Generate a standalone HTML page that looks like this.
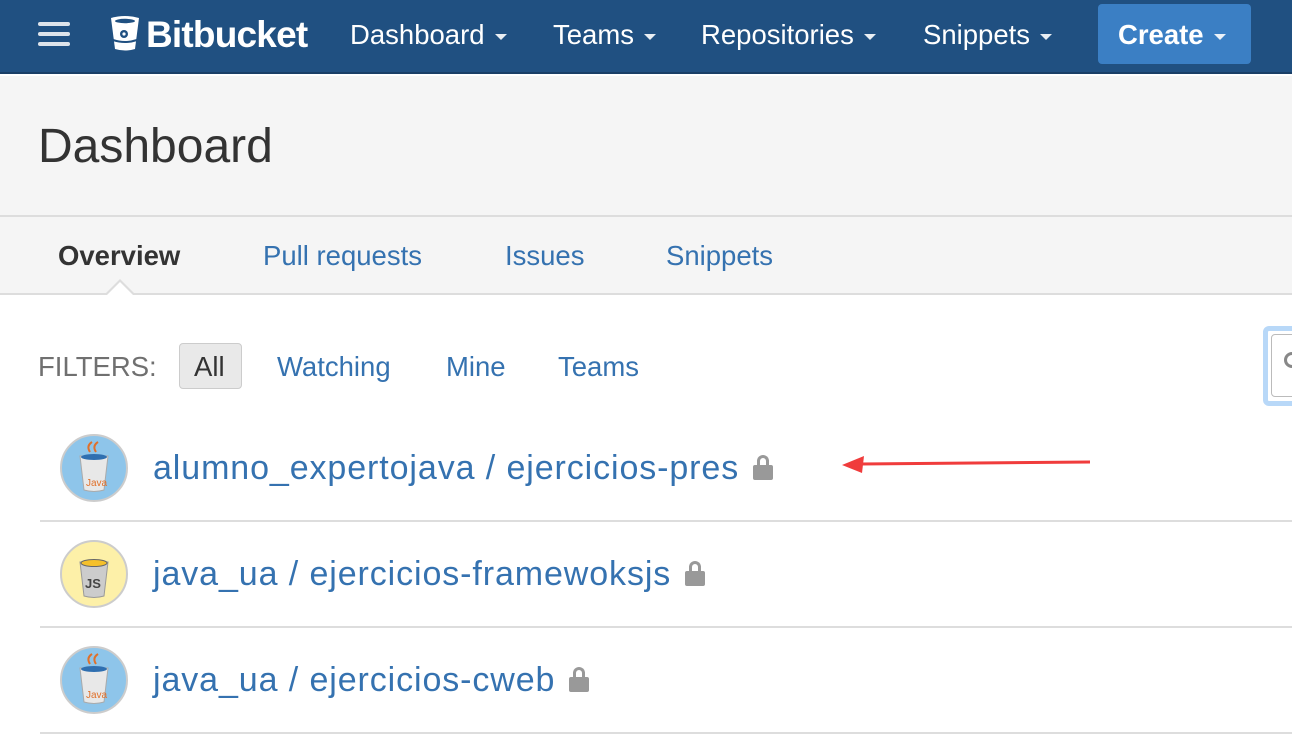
<!DOCTYPE html>
<html><head><style>
*{margin:0;padding:0;box-sizing:border-box}
body{width:1292px;height:738px;overflow:hidden;background:#fff;font-family:"Liberation Sans",Arial,sans-serif;position:relative}
.a{position:absolute;white-space:nowrap}
.nav{position:absolute;left:0;top:0;width:1292px;height:74px;background:#205081;border-bottom:2px solid #1a3f66}
.nl{color:#fff;font-size:27.5px;top:19px}
.car{display:inline-block;width:0;height:0;border-left:6px solid transparent;border-right:6px solid transparent;border-top:6px solid #fff;vertical-align:middle;margin-left:10px;opacity:.9}
.hdr{position:absolute;left:0;top:76px;width:1292px;height:219px;background:#f5f5f5;border-bottom:2px solid #ddd}
.tab{font-size:27.5px;top:240px;color:#3572b0}
.repo{font-size:34px;color:#3572b0;letter-spacing:0.9px}
.sep{position:absolute;left:40px;width:1252px;height:2px;background:#ddd}
.lock{display:inline-block;width:20px;height:15px;background:#999;border-radius:2px;position:relative;margin-left:14px;vertical-align:-1px}
.lock:before{content:"";position:absolute;left:4px;top:-10px;width:12px;height:13px;border:3px solid #999;border-bottom:none;border-radius:7px 7px 0 0;box-sizing:border-box}
.f{font-size:27.5px;top:351px}
</style></head><body>
<div class="nav"></div>
<div class="a" style="left:38px;top:22px;width:32px;height:4px;background:#dde3ea;border-radius:2px"></div>
<div class="a" style="left:38px;top:32px;width:32px;height:4px;background:#dde3ea;border-radius:2px"></div>
<div class="a" style="left:38px;top:42px;width:32px;height:4px;background:#dde3ea;border-radius:2px"></div>
<svg class="a" style="left:110px;top:16px" width="30" height="36" viewBox="0 0 30 36"><path d="M1 2 Q15 -2 29 2 L25 33 Q15 36 5 33 Z" fill="#fff"/><ellipse cx="15" cy="5" rx="10" ry="2.2" fill="#205081"/><circle cx="14" cy="18" r="4" fill="#205081"/><circle cx="14" cy="18" r="1.6" fill="#fff"/><path d="M3 24 Q15 28 27 24" stroke="#205081" stroke-width="2" fill="none"/></svg>
<div class="a" style="left:146px;top:14px;color:#fff;font-size:37px;font-weight:bold;letter-spacing:-0.8px">Bitbucket</div>
<div class="a nl" style="left:350px">Dashboard<span class="car"></span></div>
<div class="a nl" style="left:553px">Teams<span class="car"></span></div>
<div class="a nl" style="left:701px">Repositories<span class="car"></span></div>
<div class="a nl" style="left:923px">Snippets<span class="car"></span></div>
<div class="a" style="left:1098px;top:4px;width:153px;height:60px;background:#3b7fc4;border-radius:4px"></div>
<div class="a nl" style="left:1118px;font-weight:bold">Create<span class="car"></span></div>
<div class="hdr"></div>
<div class="a" style="left:0;top:215px;width:1292px;height:2px;background:#ddd"></div>
<div class="a" style="left:38px;top:119px;font-size:48px;color:#333">Dashboard</div>
<div class="a tab" style="left:58px;color:#333;font-weight:bold">Overview</div>
<div class="a tab" style="left:263px">Pull requests</div>
<div class="a tab" style="left:505px">Issues</div>
<div class="a tab" style="left:666px">Snippets</div>
<div class="a" style="left:104px;top:279px;width:0;height:0;border-left:16px solid transparent;border-right:16px solid transparent;border-bottom:16px solid #ddd"></div>
<div class="a" style="left:106px;top:282px;width:0;height:0;border-left:14px solid transparent;border-right:14px solid transparent;border-bottom:14px solid #fff"></div>
<div class="a f" style="left:38px;color:#707070">FILTERS:</div>
<div class="a" style="left:179px;top:343px;width:63px;height:46px;background:#e9e9e9;border:1px solid #ccc;border-radius:4px"></div>
<div class="a f" style="left:194px;color:#333">All</div>
<div class="a f" style="left:277px;color:#3572b0">Watching</div>
<div class="a f" style="left:446px;color:#3572b0">Mine</div>
<div class="a f" style="left:558px;color:#3572b0">Teams</div>
<div class="a" style="left:1263px;top:326px;width:40px;height:80px;border:5px solid #b8d8f8;border-radius:6px"></div>
<div class="a" style="left:1271px;top:334px;width:30px;height:63px;border:1px solid #bbb;border-radius:4px;background:#fff"></div>
<div class="a" style="left:1284px;top:352px;width:16px;height:16px;border:3px solid #888;border-radius:50%"></div>

<svg class="a" style="left:60px;top:434px" width="68" height="68"><circle cx="34" cy="34" r="33" fill="#8ec5ea" stroke="#ccc" stroke-width="2"/><path d="M20 22 L48 22 L44 56 Q34 59 24 56 Z" fill="#e8e8e8" stroke="#aaa"/><ellipse cx="34" cy="23" rx="13" ry="3" fill="#2f6fb0"/><path d="M30 18 Q26 12 32 8 M36 18 Q32 12 38 8" stroke="#e0702a" stroke-width="2" fill="none"/><text x="26" y="52" font-size="10" fill="#e0702a" font-family="Liberation Sans">Java</text></svg>
<div class="a repo" style="left:153px;top:449px">alumno_expertojava / ejercicios-pres<span class="lock"></span></div>
<svg class="a" style="left:840px;top:452px" width="252" height="24"><line x1="20" y1="12" x2="250" y2="10" stroke="#f03c3c" stroke-width="3"/><path d="M2 13 L24 4 L22 21 Z" fill="#f03c3c"/></svg>
<div class="sep" style="top:520px"></div>
<svg class="a" style="left:60px;top:540px" width="68" height="68"><circle cx="34" cy="34" r="33" fill="#fdf0a8" stroke="#ccc" stroke-width="2"/><path d="M20 22 L48 22 L44 56 Q34 59 24 56 Z" fill="#ccc" stroke="#999"/><ellipse cx="34" cy="23" rx="13" ry="3.5" fill="#f5c02a" stroke="#666"/><text x="25" y="48" font-size="13" font-weight="bold" fill="#444" font-family="Liberation Sans">JS</text></svg>
<div class="a repo" style="left:153px;top:555px">java_ua / ejercicios-framewoksjs<span class="lock"></span></div>
<div class="sep" style="top:626px"></div>
<svg class="a" style="left:60px;top:646px" width="68" height="68"><circle cx="34" cy="34" r="33" fill="#8ec5ea" stroke="#ccc" stroke-width="2"/><path d="M20 22 L48 22 L44 56 Q34 59 24 56 Z" fill="#e8e8e8" stroke="#aaa"/><ellipse cx="34" cy="23" rx="13" ry="3" fill="#2f6fb0"/><path d="M30 18 Q26 12 32 8 M36 18 Q32 12 38 8" stroke="#e0702a" stroke-width="2" fill="none"/><text x="26" y="52" font-size="10" fill="#e0702a" font-family="Liberation Sans">Java</text></svg>
<div class="a repo" style="left:153px;top:661px">java_ua / ejercicios-cweb<span class="lock"></span></div>
<div class="sep" style="top:732px"></div>
</body></html>
